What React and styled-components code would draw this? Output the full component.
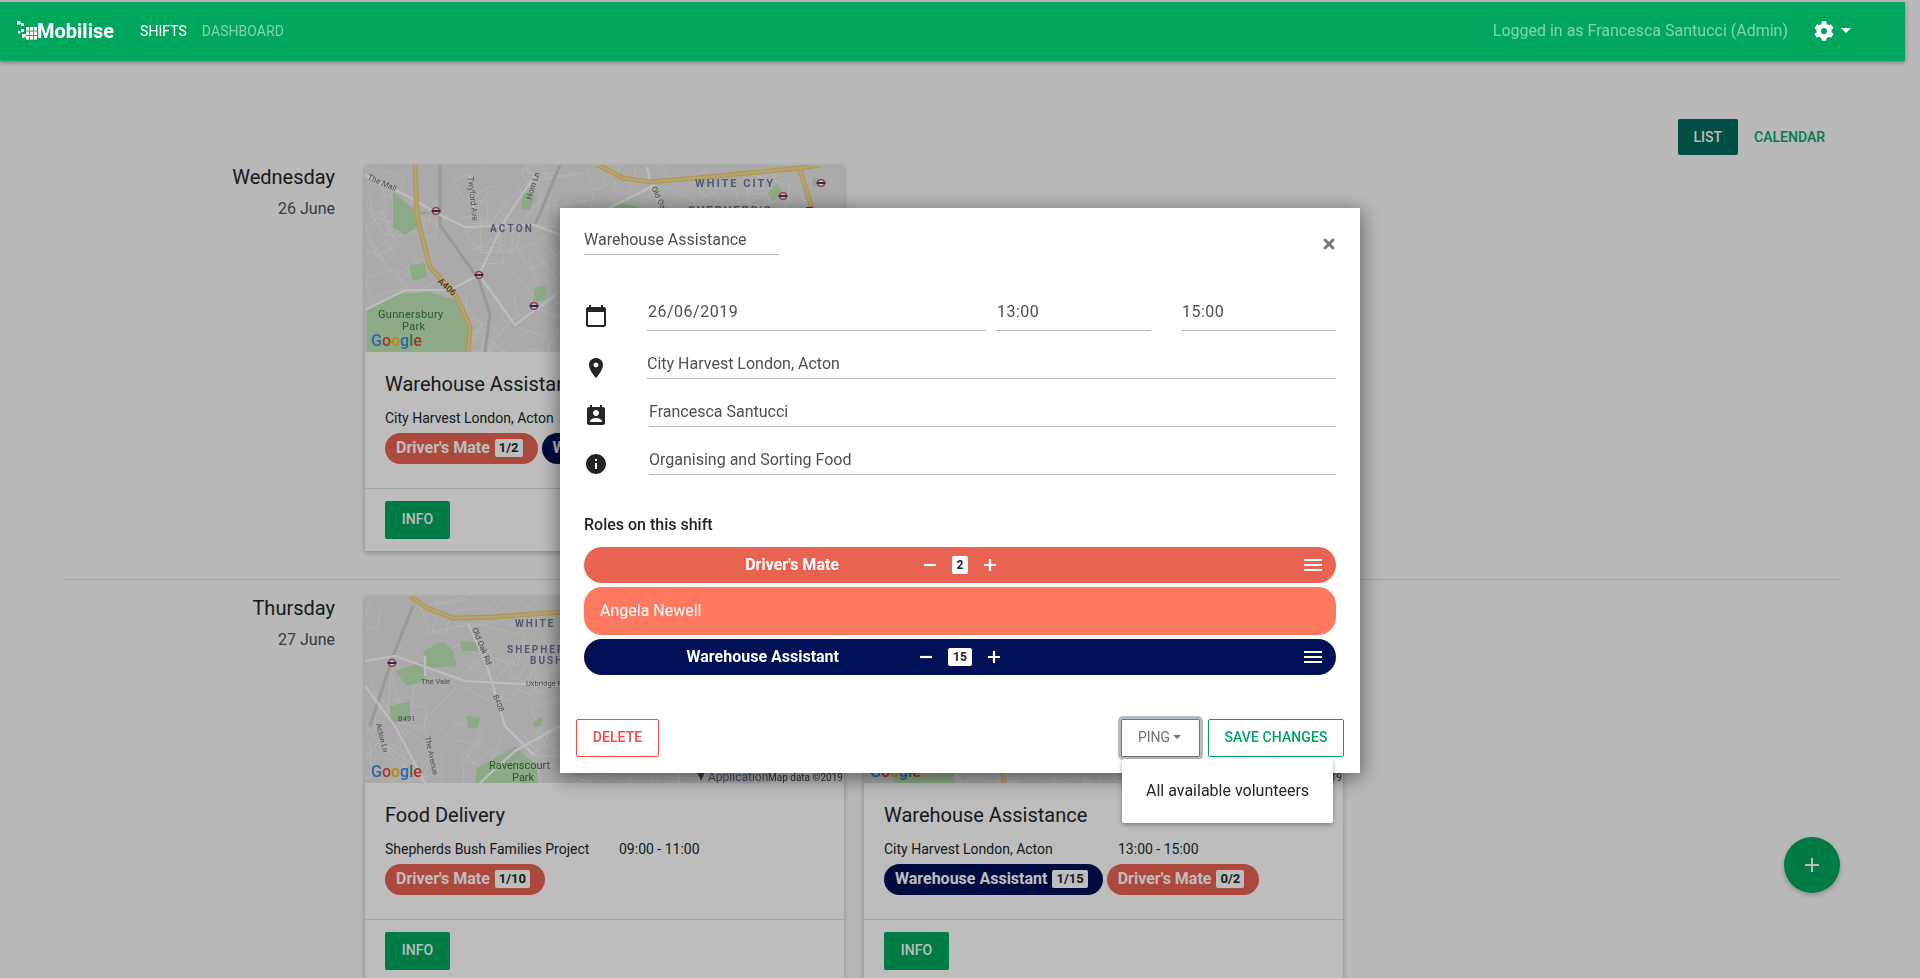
import React from 'react';
import styled, { createGlobalStyle } from 'styled-components';
import { MdCalendarToday, MdPlace, MdPermContactCalendar, MdInfo, MdAdd } from 'react-icons/md';
import { FaCog, FaTimes } from 'react-icons/fa';

const GREEN = '#00a65e';
const CORAL = '#e86352';
const NAVY = '#001056';

const GlobalStyle = createGlobalStyle`
  html, body {
    margin: 0;
    height: 100%;
    overflow: hidden;
    background: #f8f8f8;
    font-family: Roboto, "Liberation Sans", sans-serif;
    color: #212529;
  }
  * { box-sizing: border-box; }
`;

const Page = styled.div`
  width: 1905px;
  padding-top: 2px;
`;

const Navbar = styled.nav`
  position: relative;
  z-index: 30;
  height: 59px;
  background: ${GREEN};
  display: flex;
  align-items: center;
  padding: 0 54px 2px 17px;
  box-shadow: 0 2px 4px rgba(0, 0, 0, 0.3);
`;

const Brand = styled.div`
  display: flex;
  align-items: center;
  color: #fff;
  font-size: 20px;
  font-weight: 700;
  margin-right: 26px;
`;

const NavLink = styled.a`
  font-size: 14px;
  letter-spacing: 0.05px;
  margin-right: 15px;
  color: ${(p) => (p.$active ? '#fff' : 'rgba(255, 255, 255, 0.5)')};
`;

const LoggedIn = styled.span`
  margin-left: auto;
  font-size: 16px;
  color: rgba(255, 255, 255, 0.5);
  margin-right: 26px;
`;

const Caret = styled.span`
  display: inline-block;
  border-top: ${(p) => p.$size || 5}px solid ${(p) => p.$color || '#fff'};
  border-left: ${(p) => p.$size || 5}px solid transparent;
  border-right: ${(p) => p.$size || 5}px solid transparent;
  margin-left: ${(p) => p.$gap || 7}px;
`;

const ViewToggle = styled.div`
  display: flex;
  justify-content: flex-end;
  align-items: center;
  height: 36px;
  margin-top: 58px;
  padding-right: 64px;
`;

const ToggleButton = styled.button`
  height: 36px;
  padding: 0 16px;
  border: 0;
  border-radius: 2px;
  font: 500 14px Roboto, sans-serif;
  background: ${(p) => (p.$active ? '#00695c' : 'transparent')};
  color: ${(p) => (p.$active ? '#fff' : GREEN)};
`;

const DayRow = styled.section`
  display: flex;
  margin-top: ${(p) => p.$top}px;
`;

const DayLabel = styled.div`
  width: 335px;
  margin-right: 30px;
  text-align: right;
`;

const DayName = styled.div`
  font-size: 20px;
  line-height: 24px;
`;

const DayDate = styled.div`
  font-size: 16px;
  line-height: 20px;
  margin-top: 10px;
  color: #495057;
`;

const CardList = styled.div`
  display: flex;
  gap: 20px;
`;

const Card = styled.article`
  width: 479px;
  background: #fff;
  box-shadow: 0 2px 5px rgba(0, 0, 0, 0.25);
`;

const MapBox = styled.div`
  height: 187px;
  overflow: hidden;
  svg { display: block; filter: blur(0.7px); }
`;

const CardBody = styled.div`
  height: 137px;
  padding: 20px 20px 0;
  border-bottom: 1px solid #ddd;
`;

const CardTitle = styled.h3`
  margin: 0;
  font-size: 20px;
  font-weight: 400;
  line-height: 24px;
`;

const CardMeta = styled.div`
  display: flex;
  font-size: 14px;
  line-height: 20px;
  margin-top: 12px;
`;

const MetaPlace = styled.span`
  width: 234px;
`;

const ChipRow = styled.div`
  display: flex;
  gap: 4px;
  margin-top: 5px;
  white-space: nowrap;
`;

const Chip = styled.div`
  display: flex;
  align-items: center;
  height: 31px;
  padding: 0 15px 2px 11px;
  border-radius: 16px;
  background: ${(p) => p.$bg};
  color: #fff;
  font-size: 16px;
  font-weight: 700;
`;

const ChipCount = styled.span`
  margin-left: 5px;
  padding: 0 4px;
  height: 18px;
  line-height: 18px;
  border-radius: 2px;
  background: #fff;
  color: #212529;
  font-size: 13px;
  font-weight: 700;
`;

const CardFooter = styled.div`
  padding: 12px 20px 12px;
`;

const InfoButton = styled.button`
  width: 65px;
  height: 38px;
  padding: 0 0 2px;
  border: 0;
  border-radius: 2px;
  background: ${GREEN};
  color: #fff;
  font: 500 14px Roboto, sans-serif;
`;

const Rule = styled.hr`
  margin: 28px 64px 0;
  border: 0;
  border-top: 1px solid #ddd;
  width: 1777px;
`;

const Fab = styled.button`
  position: fixed;
  left: 1784px;
  top: 837px;
  width: 56px;
  height: 56px;
  border: 0;
  border-radius: 50%;
  background: ${GREEN};
  color: #fff;
  display: flex;
  align-items: center;
  justify-content: center;
  box-shadow: 0 2px 5px rgba(0, 0, 0, 0.25);
`;

const Backdrop = styled.div`
  position: fixed;
  inset: 0;
  z-index: 10;
  background: rgba(0, 0, 0, 0.26);
`;

const Modal = styled.div`
  position: fixed;
  z-index: 20;
  left: 560px;
  top: 208px;
  width: 800px;
  height: 565px;
  background: #fff;
  box-shadow: 0 4px 20px rgba(0, 0, 0, 0.55);
`;

const ModalHeader = styled.div`
  display: flex;
  justify-content: space-between;
  align-items: flex-start;
  padding: 18px 24px 0;
  height: 75px;
`;

const TitleField = styled.div`
  width: 195px;
  height: 29px;
  line-height: 27px;
  font-size: 16px;
  color: #495057;
  border-bottom: 1px solid #bbb;
`;

const CloseButton = styled.span`
  color: #777;
  font-size: 16px;
  margin-top: 10px;
  margin-right: -1px;
  line-height: 0;
`;

const FormRow = styled.div`
  display: flex;
  align-items: flex-end;
  height: 48px;
  padding: 0 24px;
`;

const FormIcon = styled.span`
  flex: none;
  width: ${(p) => p.$width}px;
  display: flex;
  color: #212529;
  margin-bottom: ${(p) => p.$drop}px;
  svg { display: block; }
`;

const Field = styled.div`
  flex: 1;
  height: 30px;
  font-size: 16px;
  line-height: 30px;
  color: #495057;
  border-bottom: 1px solid #bbb;
`;

const TimeField = styled(Field)`
  flex: none;
  width: ${(p) => p.$width}px;
  margin-left: ${(p) => p.$gap || 0}px;
  height: 38px;
  padding: 4px 0 0 1px;
  letter-spacing: 0.5px;
`;

const RolesTitle = styled.div`
  margin: 40px 24px 12px;
  font-size: 16px;
  font-weight: 500;
  line-height: 20px;
`;

const RoleList = styled.div`
  display: flex;
  flex-direction: column;
  gap: 4px;
  padding: 0 24px;
`;

const RoleBar = styled.div`
  display: grid;
  grid-template-columns: 255px 242px 1fr;
  align-items: center;
  height: 36px;
  border-radius: 18px;
  background: ${(p) => p.$bg};
  color: #fff;
  font-size: 16px;
  font-weight: 700;
`;

const RoleName = styled.div`
  text-align: right;
  padding-bottom: 2px;
`;

const Stepper = styled.div`
  display: flex;
  align-items: center;
  justify-content: center;
  gap: 12px;
`;

const StepGlyph = styled.svg`
  display: block;
  stroke: currentColor;
  stroke-width: 2.2;
`;

const StepCount = styled.span`
  height: 18px;
  padding: 0 ${(p) => p.$pad}px;
  line-height: 18px;
  background: #fff;
  border-radius: 2px;
  color: #212529;
  font-size: 12px;
  font-weight: 700;
`;

const Burger = styled.svg`
  justify-self: end;
  margin-right: 14px;
`;

const Assignee = styled.div`
  height: 48px;
  line-height: 48px;
  padding: 0 16px;
  border-radius: 18px;
  background: #ff7961;
  color: #fff;
  font-size: 16px;
`;

const ModalFooter = styled.div`
  display: flex;
  justify-content: space-between;
  padding: 0 16px;
  margin-top: 44px;
`;

const FooterGroup = styled.div`
  display: flex;
  gap: 8px;
`;

const OutlineButton = styled.button`
  height: 38px;
  width: ${(p) => p.$width}px;
  padding: 0 0 2px;
  background: #fff;
  border: 1px solid ${(p) => p.$color};
  border-radius: 2px;
  color: ${(p) => p.$color};
  font: 500 14px Roboto, sans-serif;
  letter-spacing: 0.1px;
`;

const PingWrap = styled.div`
  position: relative;
`;

const PingButton = styled.button`
  width: 79px;
  height: 38px;
  padding: 0 2px 2px 0;
  display: flex;
  align-items: center;
  justify-content: center;
  background: #fff;
  border: 1px solid #6c757d;
  border-radius: 2px;
  box-shadow: 0 0 0 3px #b4bcc2;
  color: #6c757d;
  font: 400 14px Roboto, sans-serif;
`;

const DropMenu = styled.div`
  position: absolute;
  left: 1px;
  top: 40px;
  width: 211px;
  height: 64px;
  padding-top: 21px;
  padding-left: 24px;
  background: #fff;
  border-radius: 2px;
  box-shadow: 0 2px 5px rgba(0, 0, 0, 0.35);
  font-size: 16px;
  line-height: 22px;
  white-space: nowrap;
`;

// pseudo random side streets, same result on every render
const sideStreets = (seed, count) => {
  let s = seed;
  const next = (max) => {
    s = (s * 9301 + 49297) % 233280;
    return (s / 233280) * max;
  };
  const out = [];
  for (let i = 0; i < count; i++) {
    const x = next(480);
    const y = next(187);
    const a = next(Math.PI);
    const len = 18 + next(30);
    const bx = x + Math.cos(a) * len;
    const by = y + Math.sin(a) * len;
    const cx = bx + Math.cos(a + 1.5) * (len * 0.6);
    const cy = by + Math.sin(a + 1.5) * (len * 0.6);
    const dx = cx - Math.cos(a) * len;
    const dy = cy - Math.sin(a) * len;
    out.push(`M${x.toFixed(0)} ${y.toFixed(0)}L${bx.toFixed(0)} ${by.toFixed(0)}L${cx.toFixed(0)} ${cy.toFixed(0)}L${dx.toFixed(0)} ${dy.toFixed(0)}`);
  }
  return out.join('');
};

const Tube = ({ x, y }) => (
  <g>
    <circle cx={x} cy={y} r="3.4" fill="#fff" stroke="#e0433c" strokeWidth="1.4" />
    <rect x={x - 4.5} y={y - 1} width="9" height="2" fill="#2a3f9c" />
  </g>
);

const MapTile = ({ tile }) => (
  <MapBox>
    <svg width="480" height="187" viewBox="0 0 480 187">
      <rect width="480" height="187" fill="#e6e6e6" />
      <path d={sideStreets(tile.seed, 110)} fill="none" stroke="#f4f4f4" strokeWidth="1" />
      {tile.parks.map((d) => (
        <path key={d} d={d} fill="#bfe6b5" />
      ))}
      {tile.rail && <path d={tile.rail} fill="none" stroke="#cfcfcf" strokeWidth="3" />}
      <path d={tile.roads} fill="none" stroke="#fff" strokeWidth="2.2" />
      <path d={tile.highway} fill="none" stroke="#eccb7c" strokeWidth="5" />
      <path d={tile.highway} fill="none" stroke="#f9dc8f" strokeWidth="2.6" />
      {tile.tubes.map(([x, y]) => (
        <Tube key={`${x}-${y}`} x={x} y={y} />
      ))}
      {tile.labels.map((l) => (
        <text
          key={l.text}
          x={l.x}
          y={l.y}
          fontFamily="Roboto, sans-serif"
          fontSize={l.size || 8}
          fontWeight={l.weight || 400}
          letterSpacing={l.spacing || 0}
          fill={l.fill || '#666'}
          transform={l.rotate ? `rotate(${l.rotate} ${l.x} ${l.y})` : undefined}
        >
          {l.text}
        </text>
      ))}
      <text x="6" y="181" fontFamily="Roboto, sans-serif" fontSize="16" fontWeight="500">
        <tspan fill="#4285f4">G</tspan>
        <tspan fill="#ea4335">o</tspan>
        <tspan fill="#fbbc05">o</tspan>
        <tspan fill="#4285f4">g</tspan>
        <tspan fill="#34a853">l</tspan>
        <tspan fill="#ea4335">e</tspan>
      </text>
      <rect x="403" y="176" width="77" height="11" fill="#fff" opacity="0.7" />
      <text x="403" y="185" fontFamily="Roboto, sans-serif" fontSize="10" fill="#444">Map data ©2019</text>
      <text x="343" y="185" fontFamily="Roboto, sans-serif" fontSize="12" fill="#5b6b8a">Application</text>
      <path d="M332 176h8l-4 9z" fill="#4a5a78" />
    </svg>
  </MapBox>
);

const TILES = {
  acton: {
    seed: 17,
    highway: 'M50 0L52 52L65 102L92 132L105 162L103 187M233 0L258 13L285 17L342 12L435 3L455 0M435 5L445 37L452 60',
    roads: 'M0 10L50 35L71 48L100 62L170 60L195 70M170 10L140 55L114 110L85 125L40 125L0 145M105 10L110 55M282 2L287 25L300 48M114 110L150 160L190 130M240 45L290 20',
    rail: 'M75 0L75 60L114 115L125 150L120 187M195 0L170 60',
    parks: [
      'M28 27L50 45L68 48L53 50L52 62L40 70L28 62Z',
      'M2 144L28 130L62 127L92 135L105 155L103 187L2 187Z',
      'M44 100L60 98L62 112L48 116Z',
      'M158 28L170 30L165 45L156 45Z',
      'M170 122L182 120L180 135L168 138Z',
      'M242 50L255 38L272 42L272 60L240 60Z',
      'M402 28L412 18L418 28L408 36Z',
      'M448 12L455 14L452 22L447 20Z',
    ],
    tubes: [[71, 46], [114, 110], [169, 141], [418, 31], [456, 18]],
    labels: [
      { text: 'The Mall', x: 2, y: 14, rotate: 24 },
      { text: 'Twyford Ave', x: 103, y: 12, rotate: 84 },
      { text: 'Horn Ln', x: 166, y: 35, rotate: -72 },
      { text: 'ACTON', x: 125, y: 67, size: 10, weight: 700, spacing: 2.2, fill: '#6b7a96' },
      { text: 'A406', x: 72, y: 117, size: 9, weight: 500, rotate: 42, fill: '#6e4a1e' },
      { text: 'Gunnersbury', x: 13, y: 153, size: 11, fill: '#2f7d32', spacing: 0.3 },
      { text: 'Park', x: 37, y: 165, size: 11, fill: '#2f7d32', spacing: 0.3 },
      { text: 'WHITE CITY', x: 330, y: 22, size: 11, weight: 700, spacing: 2, fill: '#6b7a96' },
      { text: "SHEPHERD'S", x: 323, y: 49, size: 11, weight: 700, spacing: 2, fill: '#6b7a96' },
      { text: 'Old Oak', x: 286, y: 23, rotate: 65 },
      { text: 'A2', x: 441, y: 42, size: 9, weight: 500, rotate: 70, fill: '#6e4a1e' },
    ],
  },
  bush: {
    seed: 91,
    highway: 'M45 0L62 12L88 22L128 21L195 16L300 5L340 0',
    roads: 'M0 65L30 60L100 85L195 90M103 27L122 70L140 130L170 160M0 90L30 130L60 187M195 130L150 155L115 187M60 60L60 80',
    rail: 'M48 10L28 60L5 130',
    parks: [
      'M58 55L78 45L88 55L92 70L62 72L60 60Z',
      'M95 45L113 46L115 55L97 55Z',
      'M30 75L58 66L60 85L42 90Z',
      'M25 110L45 105L45 125L25 127Z',
      'M102 120L115 122L113 132L103 132Z',
      'M168 126L178 120L176 130L170 132Z',
      'M112 172L125 165L150 150L172 170L172 187L110 187Z',
    ],
    tubes: [[27, 67]],
    labels: [
      { text: 'Old Oak Rd', x: 107, y: 33, rotate: 68 },
      { text: 'WHITE', x: 150, y: 31, size: 10, weight: 700, spacing: 2, fill: '#6b7a96' },
      { text: 'SHEPHERD', x: 142, y: 57, size: 10, weight: 700, spacing: 2, fill: '#6b7a96' },
      { text: 'BUSH', x: 165, y: 68, size: 10, weight: 700, spacing: 2, fill: '#6b7a96' },
      { text: 'The Vale', x: 56, y: 88, size: 7.5 },
      { text: 'Uxbridge Rd', x: 161, y: 90, size: 7.5 },
      { text: 'B408', x: 128, y: 100, size: 7.5, rotate: 68 },
      { text: 'B491', x: 33, y: 125, size: 7.5 },
      { text: 'Acton Ln', x: 11, y: 128, size: 7.5, rotate: 76 },
      { text: 'The Avenue', x: 60, y: 141, size: 7.5, rotate: 78 },
      { text: 'Ravenscourt', x: 124, y: 173, size: 11, fill: '#2f7d32' },
      { text: 'Park', x: 147, y: 185, size: 11, fill: '#2f7d32' },
    ],
  },
  acton2: {
    seed: 43,
    highway: 'M120 0L125 90L140 187',
    roads: 'M0 120L200 170L480 150M300 0L320 187',
    parks: ['M330 150L400 150L400 187L330 187Z', 'M30 160L90 160L90 187L30 187Z'],
    tubes: [[470, 178]],
    labels: [],
  },
};

const Chips = ({ items }) => (
  <ChipRow>
    {items.map(([name, count, bg]) => (
      <Chip key={name} $bg={bg}>
        {name}
        <ChipCount>{count}</ChipCount>
      </Chip>
    ))}
  </ChipRow>
);

const ShiftCard = ({ tile, title, place, time, chips }) => (
  <Card>
    <MapTile tile={tile} />
    <CardBody>
      <CardTitle>{title}</CardTitle>
      <CardMeta>
        <MetaPlace>{place}</MetaPlace>
        <span>{time}</span>
      </CardMeta>
      <Chips items={chips} />
    </CardBody>
    <CardFooter>
      <InfoButton>INFO</InfoButton>
    </CardFooter>
  </Card>
);

const Logo = () => (
  <svg width="20" height="20" viewBox="0 0 20 20" fill="#fff">
    <rect x="0" y="0" width="3.5" height="3.5" />
    <rect x="4" y="2" width="3" height="3" />
    <rect x="4" y="8" width="3" height="3" />
    <rect x="1" y="10" width="2.4" height="2.4" />
    <rect x="5" y="13" width="3.6" height="3.6" />
    {[9, 13, 17].flatMap((x) =>
      [6, 10.5, 15].map((y) => <rect key={`${x}-${y}`} x={x} y={y} width="3.2" height="3.6" />)
    )}
  </svg>
);

const Hamburger = () => (
  <Burger width="18" height="12" viewBox="0 0 18 12" stroke="#fff" strokeWidth="2">
    <path d="M0 1h18M0 6h18M0 11h18" />
  </Burger>
);

const Counter = ({ value, pad }) => (
  <Stepper>
    <StepGlyph width="20" height="20" viewBox="0 0 20 20">
      <path d="M4 10h12" />
    </StepGlyph>
    <StepCount $pad={pad}>{value}</StepCount>
    <StepGlyph width="20" height="20" viewBox="0 0 20 20">
      <path d="M4 10h12M10 4v12" />
    </StepGlyph>
  </Stepper>
);

const App = () => {
  return (
    <Page>
      <GlobalStyle />
      <Navbar>
        <Brand>
          <Logo />
          Mobilise
        </Brand>
        <NavLink $active>SHIFTS</NavLink>
        <NavLink>DASHBOARD</NavLink>
        <LoggedIn>Logged in as Francesca Santucci (Admin)</LoggedIn>
        <FaCog size={20} color="#fff" />
        <Caret />
      </Navbar>

      <ViewToggle>
        <ToggleButton $active>LIST</ToggleButton>
        <ToggleButton>CALENDAR</ToggleButton>
      </ViewToggle>

      <DayRow $top={10}>
        <DayLabel>
          <DayName>Wednesday</DayName>
          <DayDate>26 June</DayDate>
        </DayLabel>
        <CardList>
          <ShiftCard
            tile={TILES.acton}
            title="Warehouse Assistance"
            place="City Harvest London, Acton"
            time="13:00 - 15:00"
            chips={[["Driver's Mate", '1/2', CORAL], ['Warehouse Assistant', '1/15', NAVY]]}
          />
        </CardList>
      </DayRow>

      <Rule />

      <DayRow $top={16}>
        <DayLabel>
          <DayName>Thursday</DayName>
          <DayDate>27 June</DayDate>
        </DayLabel>
        <CardList>
          <ShiftCard
            tile={TILES.bush}
            title="Food Delivery"
            place="Shepherds Bush Families Project"
            time="09:00 - 11:00"
            chips={[["Driver's Mate", '1/10', CORAL]]}
          />
          <ShiftCard
            tile={TILES.acton2}
            title="Warehouse Assistance"
            place="City Harvest London, Acton"
            time="13:00 - 15:00"
            chips={[['Warehouse Assistant', '1/15', NAVY], ["Driver's Mate", '0/2', CORAL]]}
          />
        </CardList>
      </DayRow>

      <Fab>
        <MdAdd size={24} />
      </Fab>

      <Backdrop />

      <Modal>
        <ModalHeader>
          <TitleField>Warehouse Assistance</TitleField>
          <CloseButton>
            <FaTimes />
          </CloseButton>
        </ModalHeader>

        <FormRow>
          <FormIcon $width={63} $drop={3}>
            <MdCalendarToday size={24} />
          </FormIcon>
          <TimeField $width={339}>26/06/2019</TimeField>
          <TimeField $width={155} $gap={10}>13:00</TimeField>
          <TimeField $width={155} $gap={30}>15:00</TimeField>
        </FormRow>
        <FormRow>
          <FormIcon $width={63} $drop={-1}>
            <MdPlace size={24} />
          </FormIcon>
          <Field>City Harvest London, Acton</Field>
        </FormRow>
        <FormRow>
          <FormIcon $width={65} $drop={-1}>
            <MdPermContactCalendar size={24} />
          </FormIcon>
          <Field>Francesca Santucci</Field>
        </FormRow>
        <FormRow>
          <FormIcon $width={65} $drop={-1}>
            <MdInfo size={24} />
          </FormIcon>
          <Field>Organising and Sorting Food</Field>
        </FormRow>

        <RolesTitle>Roles on this shift</RolesTitle>
        <RoleList>
          <RoleBar $bg={CORAL}>
            <RoleName>Driver's Mate</RoleName>
            <Counter value="2" pad={5} />
            <Hamburger />
          </RoleBar>
          <Assignee>Angela Newell</Assignee>
          <RoleBar $bg={NAVY}>
            <RoleName>Warehouse Assistant</RoleName>
            <Counter value="15" pad={5} />
            <Hamburger />
          </RoleBar>
        </RoleList>

        <ModalFooter>
          <OutlineButton $color="#ff4444" $width={83}>DELETE</OutlineButton>
          <FooterGroup>
            <PingWrap>
              <PingButton>
                PING
                <Caret $color="#6c757d" $gap={3} $size={4} />
              </PingButton>
              <DropMenu>All available volunteers</DropMenu>
            </PingWrap>
            <OutlineButton $color={GREEN} $width={136}>SAVE CHANGES</OutlineButton>
          </FooterGroup>
        </ModalFooter>
      </Modal>
    </Page>
  );
};

export default App;
